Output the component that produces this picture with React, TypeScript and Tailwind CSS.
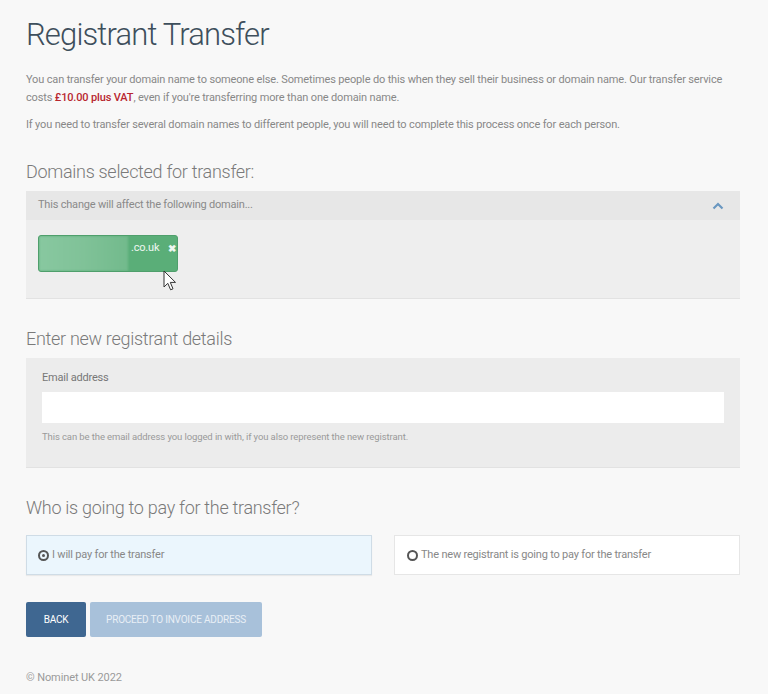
export default function App() {
  const font = { fontFamily: "Roboto, 'Noto Sans', sans-serif" };
  return (
    <div className="min-h-[694px] bg-[#f8f8f8] text-[#777]" style={font}>
      <div className="pl-[26px] pr-[28px] pt-[16px] pb-[8px]">
        <h1 className="text-[31px] leading-[38px] font-light text-[#3e4f5c] tracking-[-0.85px]">
          Registrant Transfer
        </h1>

        <p className="mt-[17px] text-[11px] leading-[18px] tracking-[-0.15px] text-[#888]">
          You can transfer your domain name to someone else. Sometimes people do this when they sell their business or domain name. Our transfer service costs <span className="font-medium text-[#b8262f]">£10.00 plus VAT</span>, even if you're transferring more than one domain name.
        </p>
        <p className="mt-[9px] text-[11px] leading-[18px] tracking-[-0.15px] text-[#888]">
          If you need to transfer several domain names to different people, you will need to complete this process once for each person.
        </p>

        <h2 className="mt-[26px] text-[18px] leading-[24px] font-light text-[#7a7a7a] tracking-[-0.3px]">
          Domains selected for transfer:
        </h2>
        <div className="mt-[7px] bg-[#eeeeee] border-b border-[#e2e2e2]">
          <div className="h-[29px] bg-[#e7e7e7] flex items-center justify-between pl-[12px] pr-[16px]">
            <span className="text-[11px] tracking-[-0.2px] text-[#8a8a8a]">This change will affect the following domain...</span>
            <svg width="12" height="8" viewBox="0 0 12 8" fill="none">
              <path d="M1.5 6.5 L6 2 L10.5 6.5" stroke="#6a97c0" strokeWidth="2.2" />
            </svg>
          </div>
          <div className="h-[78px] pt-[15px] pl-[12px] relative">
            <div className="inline-flex items-center h-[37px] w-[140px] rounded-[3px] bg-[#5aae78] border border-[#4f9f6c] overflow-hidden">
              <div className="h-full w-[89px] bg-gradient-to-r from-[#88c8a0] via-[#80c298] to-[#72ba8c] blur-[1px]" />
              <span className="ml-[3px] -mt-[10px] text-[11px] text-white/90 tracking-[-0.2px]">.co.uk</span>
              <span className="ml-[9px] -mt-[10px] text-[10px] font-bold text-white/90">✖</span>
            </div>
            <svg className="absolute left-[137px] top-[50px]" width="14" height="22" viewBox="0 0 14 22">
              <path d="M1 1 L1 17 L4.8 13.3 L7.6 19.8 L10 18.8 L7.3 12.4 L12.5 12.4 Z" fill="#fff" stroke="#333" strokeWidth="1" strokeLinejoin="round" />
            </svg>
          </div>
        </div>

        <h2 className="mt-[28px] text-[18px] leading-[24px] font-light text-[#7a7a7a] tracking-[-0.3px]">
          Enter new registrant details
        </h2>
        <div className="mt-[7px] bg-[#ececec] border-b border-[#e2e2e2] px-[16px] pt-[13px] pb-[24px]">
          <label className="block text-[11px] leading-[14px] text-[#777] tracking-[-0.2px]">Email address</label>
          <div className="mt-[7px] h-[31px] bg-white" />
          <p className="mt-[8px] text-[9.5px] leading-[12px] text-[#9a9a9a] tracking-[-0.1px]">
            This can be the email address you logged in with, if you also represent the new registrant.
          </p>
        </div>

        <h2 className="mt-[28px] text-[18px] leading-[24px] font-light text-[#7a7a7a] tracking-[-0.3px]">
          Who is going to pay for the transfer?
        </h2>
        <div className="mt-[15px] grid grid-cols-2 gap-[22px]">
          <div className="h-[40px] bg-[#ebf6fd] border border-[#cfdce6] shadow-[0_1px_1px_rgba(0,0,0,0.06)] flex items-center pl-[11px] gap-[3px]">
            <span className="w-[11px] h-[11px] rounded-full border-[2px] border-[#555] flex items-center justify-center">
              <span className="w-[3px] h-[3px] rounded-full bg-[#555]" />
            </span>
            <span className="text-[11px] tracking-[-0.2px] text-[#888]">I will pay for the transfer</span>
          </div>
          <div className="h-[40px] bg-white border border-[#e6e6e6] flex items-center pl-[12px] gap-[3px]">
            <span className="w-[11px] h-[11px] rounded-full border-[2px] border-[#555]" />
            <span className="text-[11px] tracking-[-0.2px] text-[#888]">The new registrant is going to pay for the transfer</span>
          </div>
        </div>

        <div className="mt-[27px] flex gap-[4px]">
          <button className="h-[35px] w-[60px] rounded-[2px] bg-[#3f6791] text-white text-[10px] tracking-[-0.2px]">BACK</button>
          <button className="h-[35px] w-[172px] rounded-[2px] bg-[#a8c1da] text-[#e8eff6] text-[10px] tracking-[-0.2px]">PROCEED TO INVOICE ADDRESS</button>
        </div>

        <p className="mt-[33px] text-[11px] tracking-[-0.1px] text-[#9a9a9a]">© Nominet UK 2022</p>
      </div>
    </div>
  );
}
